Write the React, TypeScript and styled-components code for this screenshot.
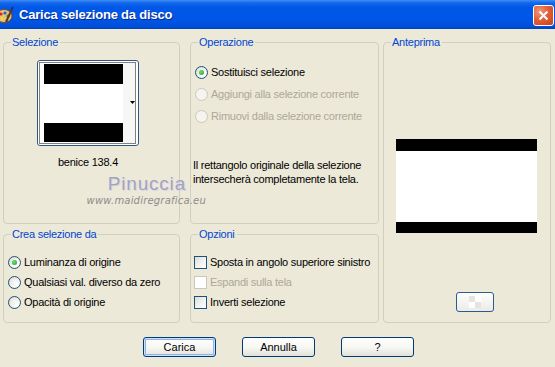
import styled, { createGlobalStyle } from "styled-components";

const GlobalStyle = createGlobalStyle`
  html, body { margin: 0; padding: 0; }
  body {
    background: #ece9d8;
    font-family: "Liberation Sans", Arial, sans-serif;
    font-size: 11px;
    color: #000;
  }
`;

const Dialog = styled.div`
  position: relative;
  width: 555px;
  height: 367px;
  background: #ece9d8;
  overflow: hidden;
  letter-spacing: -0.25px;
`;

const TitleBar = styled.div`
  height: 29px;
  display: flex;
  align-items: center;
  background: linear-gradient(
    #3c8cf6 0%,
    #1467ea 10%,
    #0058e8 25%,
    #0055e5 70%,
    #004fda 90%,
    #0043be 100%
  );
`;

const TitleIcon = styled.svg`
  flex: none;
  margin-left: -4px;
`;

const TitleText = styled.div`
  flex: 1;
  margin-left: 5px;
  color: #fff;
  font: bold 13px "Liberation Sans", Arial, sans-serif;
  letter-spacing: -0.2px;
  text-shadow: 1px 1px 0 #0c2a8a;
`;

const CloseButton = styled.div`
  width: 21px;
  height: 21px;
  margin: 2px 1px 0 0;
  box-sizing: border-box;
  border: 1px solid #fff;
  border-radius: 3px;
  background: radial-gradient(circle at 30% 30%, #f09a7c 0%, #e35f36 45%, #c4401c 100%);
  display: flex;
  align-items: center;
  justify-content: center;
`;

const Panels = styled.div`
  display: grid;
  grid-template-columns: 187px 193px 168px;
  grid-template-rows: 188px 95px;
  row-gap: 4px;
  padding: 7px 0 0 3px;
`;

const Group = styled.fieldset<{ $w: number; $col: number; $row: string }>`
  margin: 0;
  padding: 0;
  min-width: 0;
  width: ${(p) => p.$w}px;
  box-sizing: border-box;
  border: 1px solid #d0d0bf;
  border-radius: 4px;
  grid-column: ${(p) => p.$col};
  grid-row: ${(p) => p.$row};
  display: flex;
  flex-direction: column;
`;

const Legend = styled.legend`
  color: #0046d5;
  padding: 0 2px 0 1px;
  margin-left: 7px;
  line-height: 13px;
  font-size: 11px;
`;

const Centered = styled.div`
  display: flex;
  flex-direction: column;
  align-items: center;
  padding-right: 7px;
`;

const Thumb = styled.div`
  margin-top: 11px;
  width: 102px;
  height: 86px;
  box-sizing: border-box;
  border: 1px solid #2f5688;
  border-radius: 3px;
  background: #fff;
`;

const ThumbName = styled.div`
  margin-top: 10px;
  line-height: 13px;
`;

const OptionList = styled.div<{ $top: number; $left: number }>`
  display: flex;
  flex-direction: column;
  margin-top: ${(p) => p.$top}px;
  padding-left: ${(p) => p.$left}px;
`;

const OptionRow = styled.div<{ $h: number; $disabled?: boolean }>`
  display: flex;
  align-items: center;
  gap: 3px;
  height: ${(p) => p.$h}px;
  color: ${(p) => (p.$disabled ? "#aca899" : "#000")};
  white-space: nowrap;
`;

const RadioCircle = styled.span<{ $disabled?: boolean }>`
  flex: none;
  width: 13px;
  height: 13px;
  box-sizing: border-box;
  border-radius: 50%;
  border: 1px solid ${(p) => (p.$disabled ? "#cac8bb" : "#1c5180")};
  background: ${(p) =>
    p.$disabled
      ? "#f5f4ef"
      : "radial-gradient(circle at 70% 70%, #ffffff 0%, #f1f0ea 50%, #d4d1c5 100%)"};
  display: flex;
  align-items: center;
  justify-content: center;
`;

const RadioDot = styled.span`
  width: 5px;
  height: 5px;
  border-radius: 50%;
  background: radial-gradient(circle at 40% 40%, #6ee06e, #1f9c1f);
`;

const CheckBox = styled.span<{ $disabled?: boolean }>`
  flex: none;
  width: 13px;
  height: 13px;
  box-sizing: border-box;
  border: 1px solid ${(p) => (p.$disabled ? "#cac8bb" : "#1c5180")};
  background: ${(p) =>
    p.$disabled
      ? "#ffffff"
      : "linear-gradient(135deg, #dcdcd6 0%, #f2f2ee 55%, #ffffff 100%)"};
`;

const Note = styled.p`
  margin: 31px 0 0 2px;
  line-height: 14px;
`;

const PreviewImage = styled.div`
  margin: 90px 0 0 12px;
  width: 141px;
  height: 94px;
  box-sizing: border-box;
  background: #fff;
  border-top: 12px solid #000;
  border-bottom: 11px solid #000;
`;

const ZoomButton = styled.div`
  margin: 59px 0 0 72px;
  width: 38px;
  height: 20px;
  box-sizing: border-box;
  border: 1px solid #2c5b94;
  border-radius: 3px;
  background:
    conic-gradient(#ffffff 25%, #e4e4e0 0 50%, #ffffff 0 75%, #e4e4e0 0) 50% 50% / 6px 6px no-repeat,
    linear-gradient(#fdfdfb, #ecebe6);
  background-size: 12px 12px, auto;
`;

const ButtonRow = styled.div`
  display: flex;
  justify-content: center;
  gap: 26px;
  margin-top: 14px;
  padding-left: 2px;
`;

const Button = styled.button<{ $default?: boolean }>`
  width: 73px;
  height: 20px;
  box-sizing: border-box;
  padding: 0;
  border: 1px solid #003c74;
  border-radius: 3px;
  background: linear-gradient(#ffffff 0%, #f6f6f2 55%, #e2e1d9 100%);
  font: 11px "Liberation Sans", Arial, sans-serif;
  color: #000;
  box-shadow: ${(p) =>
    p.$default ? "inset 0 0 0 1px #cde0fa, inset 0 0 0 2px #8db2ec" : "none"};
`;

const Watermark = styled.div`
  position: absolute;
  left: 82px;
  top: 173px;
  display: flex;
  flex-direction: column;
  align-items: flex-end;
  width: 124px;
  pointer-events: none;
  letter-spacing: 0;
`;

const WatermarkName = styled.div`
  margin-right: 20px;
  font: 19px "Liberation Sans", sans-serif;
  letter-spacing: 0.8px;
  color: #a3a3c0;
  text-shadow: 1px 1px 0 #d8d8e4;
  line-height: 22px;
`;

const WatermarkSite = styled.div`
  font: italic 10px "DejaVu Sans", sans-serif;
  color: #8c8c8c;
  line-height: 12px;
  letter-spacing: 0.2px;
`;

function App() {
  return (
    <>
      <GlobalStyle />
      <Dialog>
        <TitleBar>
          <TitleIcon width="18" height="18" viewBox="0 0 18 18">
            <ellipse cx="8" cy="10" rx="8" ry="6.5" fill="#e8c080" stroke="#7a4a20" strokeWidth="1" />
            <circle cx="5" cy="8" r="1.6" fill="#e02020" />
            <circle cx="9" cy="7" r="1.6" fill="#2060e0" />
            <circle cx="12" cy="10" r="1.6" fill="#20a020" />
            <circle cx="6" cy="12.5" r="1.6" fill="#f0e020" />
            <path d="M10 16 L16 3" stroke="#5a3a1a" strokeWidth="2" />
            <path d="M15.5 4 L17 1" stroke="#203080" strokeWidth="2" />
          </TitleIcon>
          <TitleText>Carica selezione da disco</TitleText>
          <CloseButton>
            <svg width="11" height="11" viewBox="0 0 11 11">
              <path d="M1.5 1.5 L9.5 9.5 M9.5 1.5 L1.5 9.5" stroke="#fff" strokeWidth="2" />
            </svg>
          </CloseButton>
        </TitleBar>

        <Panels>
          <Group $w={177} $col={1} $row="1">
            <Legend>Selezione</Legend>
            <Centered>
              <Thumb>
                <svg width="100" height="84" viewBox="0 0 100 84">
                  <rect x="1.5" y="1.5" width="96" height="81" fill="none" stroke="#000" strokeDasharray="1 1" />
                  <rect x="85" y="2" width="12" height="80" fill="#f6f6f4" />
                  <rect x="6" y="3" width="79" height="20" fill="#000" />
                  <rect x="6" y="62" width="79" height="19" fill="#000" />
                  <path d="M92 40 L97 40 L94.5 43 Z" fill="#000" />
                </svg>
              </Thumb>
              <ThumbName>benice 138.4</ThumbName>
            </Centered>
          </Group>

          <Group $w={189} $col={2} $row="1">
            <Legend>Operazione</Legend>
            <OptionList $top={12} $left={4}>
              <OptionRow $h={22}>
                <RadioCircle>
                  <RadioDot />
                </RadioCircle>
                Sostituisci selezione
              </OptionRow>
              <OptionRow $h={22} $disabled>
                <RadioCircle $disabled />
                Aggiungi alla selezione corrente
              </OptionRow>
              <OptionRow $h={22} $disabled>
                <RadioCircle $disabled />
                Rimuovi dalla selezione corrente
              </OptionRow>
            </OptionList>
            <Note>
              Il rettangolo originale della selezione
              <br />
              intersecherà completamente la tela.
            </Note>
          </Group>

          <Group $w={168} $col={3} $row="1 / span 2">
            <Legend>Anteprima</Legend>
            <PreviewImage />
            <ZoomButton />
          </Group>

          <Group $w={177} $col={1} $row="2">
            <Legend>Crea selezione da</Legend>
            <OptionList $top={11} $left={4}>
              <OptionRow $h={20}>
                <RadioCircle>
                  <RadioDot />
                </RadioCircle>
                Luminanza di origine
              </OptionRow>
              <OptionRow $h={20}>
                <RadioCircle />
                Qualsiasi val. diverso da zero
              </OptionRow>
              <OptionRow $h={20}>
                <RadioCircle />
                Opacità di origine
              </OptionRow>
            </OptionList>
          </Group>

          <Group $w={189} $col={2} $row="2">
            <Legend>Opzioni</Legend>
            <OptionList $top={11} $left={3}>
              <OptionRow $h={20}>
                <CheckBox />
                Sposta in angolo superiore sinistro
              </OptionRow>
              <OptionRow $h={20} $disabled>
                <CheckBox $disabled />
                Espandi sulla tela
              </OptionRow>
              <OptionRow $h={20}>
                <CheckBox />
                Inverti selezione
              </OptionRow>
            </OptionList>
          </Group>
        </Panels>

        <ButtonRow>
          <Button $default>Carica</Button>
          <Button>Annulla</Button>
          <Button>?</Button>
        </ButtonRow>

        <Watermark>
          <WatermarkName>Pinuccia</WatermarkName>
          <WatermarkSite>www.maidiregrafica.eu</WatermarkSite>
        </Watermark>
      </Dialog>
    </>
  );
}

export default App;
